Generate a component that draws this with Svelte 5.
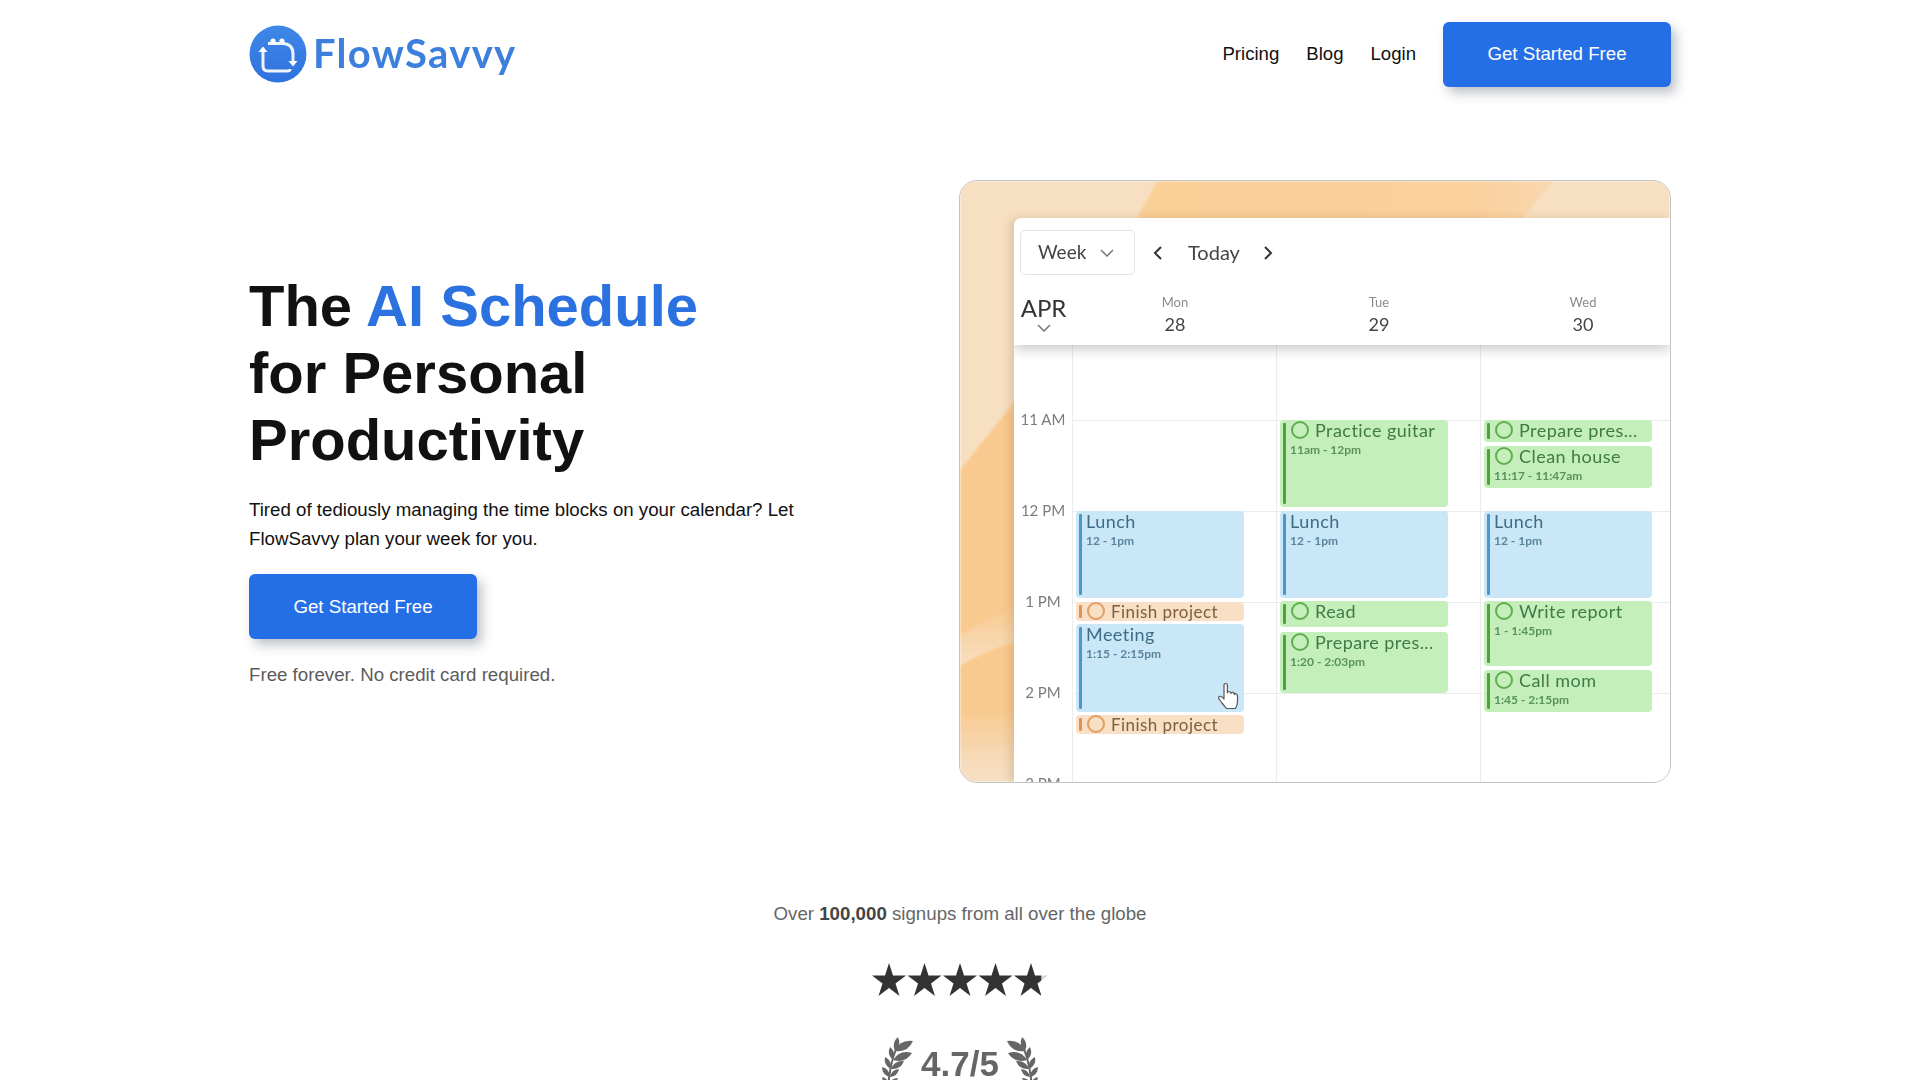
<script>
  const days = [
    {
      name: "Mon",
      date: 28,
      events: [
        { kind: "blue", title: "Lunch", time: "12 - 1pm", top: 166, height: 87 },
        { kind: "orange", title: "Finish project", task: true, top: 257, height: 19 },
        { kind: "blue", title: "Meeting", time: "1:15 - 2:15pm", top: 279, height: 88 },
        { kind: "orange", title: "Finish project", task: true, top: 370, height: 19 }
      ]
    },
    {
      name: "Tue",
      date: 29,
      events: [
        { kind: "green", title: "Practice guitar", time: "11am - 12pm", task: true, top: 75, height: 87 },
        { kind: "blue", title: "Lunch", time: "12 - 1pm", top: 166, height: 87 },
        { kind: "green", title: "Read", task: true, top: 256, height: 26 },
        { kind: "green", title: "Prepare pres...", time: "1:20 - 2:03pm", task: true, top: 287, height: 61 }
      ]
    },
    {
      name: "Wed",
      date: 30,
      events: [
        { kind: "green", title: "Prepare pres...", task: true, top: 75, height: 22 },
        { kind: "green", title: "Clean house", time: "11:17 - 11:47am", task: true, top: 101, height: 42 },
        { kind: "blue", title: "Lunch", time: "12 - 1pm", top: 166, height: 87 },
        { kind: "green", title: "Write report", time: "1 - 1:45pm", task: true, top: 256, height: 65 },
        { kind: "green", title: "Call mom", time: "1:45 - 2:15pm", task: true, top: 325, height: 42 }
      ]
    }
  ];

  const hours = ["11 AM", "12 PM", "1 PM", "2 PM", "3 PM"];
  const starPoints = "17,0 21,12.5 34,12.5 23.5,20.5 27.5,33 17,25 6.5,33 10.5,20.5 0,12.5 13,12.5";

  // base and tip of each laurel leaf, bottom row last
  const leaves = [
    [20, 20, 38, 10], [20, 20, 23, 6],
    [18, 29, 37, 22], [18, 29, 15, 16],
    [16, 38, 29, 30], [16, 38, 10, 26],
    [15, 46, 24, 38], [15, 46, 7, 36],
    [14, 54, 23, 47], [14, 54, 7, 46]
  ];

  function leafPath([x0, y0, x1, y1]) {
    const mx = (x0 + x1) / 2;
    const my = (y0 + y1) / 2;
    const nx = (y1 - y0) * 0.38;
    const ny = (x0 - x1) * 0.38;
    return `M${x0} ${y0} Q${mx + nx} ${my + ny} ${x1} ${y1} Q${mx - nx} ${my - ny} ${x0} ${y0} Z`;
  }
</script>

{#snippet laurel()}
  <svg class="laurel" width="38" height="60" viewBox="5 0 38 60" fill="#666">
    <path d="M13 60 Q14 36 21 18" fill="none" stroke="#666" stroke-width="2" />
    {#each leaves as leaf}
      <path d={leafPath(leaf)} />
    {/each}
  </svg>
{/snippet}

<div class="page">
  <header class="nav">
    <a class="logo" href="#top">
      <svg width="58" height="58" viewBox="0 0 58 58">
        <defs>
          <linearGradient id="logo-fill" x1="0" y1="0" x2="0" y2="1">
            <stop offset="0" stop-color="#3f87e8" />
            <stop offset="1" stop-color="#2f72de" />
          </linearGradient>
        </defs>
        <circle cx="29" cy="29" r="28.5" fill="url(#logo-fill)" />
        <path d="M14 26 V41 Q14 46 19 46 H38 Q41 46 41 44" fill="none" stroke="#fff" stroke-width="3" stroke-opacity=".92" />
        <path d="M9.5 27 L14 21.5 L18.5 27 Z" fill="#fff" />
        <path d="M19 18.5 H33 Q44 18.5 44 29 V37" fill="none" stroke="#fff" stroke-width="3" stroke-opacity=".92" />
        <path d="M39.5 36 L44 41.5 L48.5 36 Z" fill="#fff" />
        <circle cx="24" cy="16" r="2.6" fill="#fff" />
        <circle cx="33" cy="16" r="2.6" fill="#fff" />
      </svg>
      <span class="wordmark">FlowSavvy</span>
    </a>
    <nav class="links">
      <a href="#pricing">Pricing</a>
      <a href="#blog">Blog</a>
      <a href="#login">Login</a>
      <a class="cta" href="#start">Get Started Free</a>
    </nav>
  </header>

  <main class="hero">
    <section class="pitch">
      <h1>The <span class="accent">AI Schedule</span><br />for Personal<br />Productivity</h1>
      <p class="lead">Tired of tediously managing the time blocks on your calendar? Let FlowSavvy plan your week for you.</p>
      <a class="cta" href="#start">Get Started Free</a>
      <p class="note">Free forever. No credit card required.</p>
    </section>

    <figure class="shot">
      <svg class="backdrop" viewBox="0 0 712 603" preserveAspectRatio="none">
        <defs>
          <linearGradient id="band-fade" x1="0" y1="0" x2="0" y2="1">
            <stop offset="0" stop-color="#f9ca90" />
            <stop offset="1" stop-color="#f8dfc0" />
          </linearGradient>
          <linearGradient id="foot-fade" x1="0" y1="0" x2="0" y2="1">
            <stop offset="0" stop-color="#f9ca90" />
            <stop offset="0.75" stop-color="#f6dcbc" />
            <stop offset="1" stop-color="#f6dfc3" />
          </linearGradient>
          <linearGradient id="strip-fade" x1="0" y1="0" x2="1" y2="0">
            <stop offset="0" stop-color="#fbcf98" />
            <stop offset="0.8" stop-color="#fbd09c" />
            <stop offset="1" stop-color="#f9d7ae" />
          </linearGradient>
        </defs>
        <rect width="712" height="603" fill="#f7dfc1" />
        <path d="M198 0 H594 L562 40 H176 Z" fill="url(#strip-fade)" />
        <path d="M0 290 L56 220 V603 H0 Z" fill="#f9ca90" />
        <path d="M0 456 Q28 440 56 426 V462 Q28 470 0 486 Z" fill="url(#band-fade)" />
        <path d="M0 530 H56 V603 H0 Z" fill="url(#foot-fade)" />
      </svg>
      <div class="calendar">
        <div class="cal-head">
          <div class="toolbar">
            <div class="view-select">
              <span class="label">Week</span>
              <svg width="14" height="8" viewBox="0 0 14 8" fill="none" stroke="#777" stroke-width="1.5"><path d="M1 1 L7 7 L13 1" /></svg>
            </div>
            <svg class="arrow" width="9" height="14" viewBox="0 0 9 14" fill="none" stroke="#333" stroke-width="2"><path d="M8 1 L2 7 L8 13" /></svg>
            <span class="today label">Today</span>
            <svg class="arrow next" width="9" height="14" viewBox="0 0 9 14" fill="none" stroke="#333" stroke-width="2"><path d="M1 1 L7 7 L1 13" /></svg>
          </div>
          <div class="day-row">
            <div class="month">
              <span>APR</span>
              <svg width="14" height="8" viewBox="0 0 14 8" fill="none" stroke="#777" stroke-width="1.5"><path d="M1 1 L7 7 L13 1" /></svg>
            </div>
            {#each days as day}
              <div class="day-head">
                <span class="day-name">{day.name}</span>
                <span class="day-date">{day.date}</span>
              </div>
            {/each}
          </div>
        </div>

        <div class="cal-body">
          <div class="gutter">
            {#each hours as hour}
              <div class="hour">{hour}</div>
            {/each}
          </div>
          {#each days as day}
            <div class="day-col">
              {#each day.events as ev}
                <div class="event {ev.kind}" style="top: {ev.top}px; height: {ev.height}px">
                  <div class="event-title">
                    {#if ev.task}<span class="ring"></span>{/if}
                    <span>{ev.title}</span>
                  </div>
                  {#if ev.time}<div class="event-time">{ev.time}</div>{/if}
                </div>
              {/each}
            </div>
          {/each}
          <svg class="pointer" width="22" height="28" viewBox="0 0 22 28" fill="#fff" stroke="#555" stroke-width="1.2" stroke-linejoin="round">
            <path d="M7 15 V3.5 Q7 1.5 8.7 1.5 Q10.4 1.5 10.4 3.5 V11 Q10.6 9.4 12.3 9.5 Q14 9.6 14 11.5 Q14.2 10.2 15.8 10.4 Q17.4 10.6 17.4 12.5 Q17.7 11.5 19 11.8 Q20.5 12.1 20.5 14 V19 Q20.5 23 18.5 26.5 H9.5 Q7.5 24 5 21 L2 17 Q1 15 2.8 14.3 Q4.5 13.8 7 17 Z" />
          </svg>
        </div>
      </div>
    </figure>
  </main>

  <section class="proof">
    <p>Over <strong>100,000</strong> signups from all over the globe</p>
    <svg class="stars" width="178" height="34" viewBox="0 0 178 34">
      <defs>
        <linearGradient id="star-fade" x1="0" y1="0" x2="1" y2="0">
          <stop offset="0.78" stop-color="#333" />
          <stop offset="0.82" stop-color="#d8d8d8" />
        </linearGradient>
      </defs>
      {#each [0, 1, 2, 3, 4] as i}
        <polygon points={starPoints} transform="translate({i * 35.5} 0)" fill={i === 4 ? "url(#star-fade)" : "#333"} />
      {/each}
    </svg>
    <div class="rating">
      {@render laurel()}
      <span class="score">4.7/5</span>
      <span class="flip">{@render laurel()}</span>
    </div>
  </section>
</div>

<style>
  :global(html), :global(body) {
    margin: 0;
    overflow-x: hidden;
  }

  :global(body) {
    background: #fff;
    font-family: "Liberation Sans", Arial, sans-serif;
    color: #111;
  }

  a {
    color: inherit;
    text-decoration: none;
  }

  .page {
    width: 1422px;
    margin: 0 auto;
  }

  .nav {
    display: flex;
    align-items: center;
    justify-content: space-between;
    padding-top: 22px;
    height: 64px;
  }

  .logo {
    display: flex;
    align-items: center;
    gap: 6px;
    filter: blur(0.4px);
  }

  .wordmark {
    font-family: Lato, sans-serif;
    font-weight: 700;
    font-size: 40px;
    line-height: 54px;
    letter-spacing: 1.3px;
    color: #3d7fdd;
    margin-top: -2px;
  }

  .links {
    display: flex;
    align-items: center;
    gap: 27px;
    font-size: 18.6px;
  }

  .cta {
    display: inline-flex;
    align-items: center;
    justify-content: center;
    width: 228px;
    height: 65px;
    border-radius: 6px;
    background: #256fe6;
    color: #fff;
    font-size: 18.7px;
    box-shadow: 5px 6px 12px rgba(40, 50, 70, 0.3);
  }

  .hero {
    display: flex;
    justify-content: space-between;
    align-items: center;
    margin-top: 94px;
  }

  .pitch {
    width: 600px;
    padding-bottom: 5px;
  }

  h1 {
    margin: 0;
    font-size: 58px;
    line-height: 67px;
    font-weight: 700;
    color: #111;
  }

  .accent {
    color: #2b72e0;
  }

  .lead {
    margin: 22px 0 21px;
    font-size: 18.7px;
    line-height: 29px;
    width: 560px;
  }

  .note {
    margin: 25px 0 0;
    font-size: 18.7px;
    color: #5c5c5c;
  }

  .shot {
    position: relative;
    box-sizing: border-box;
    width: 712px;
    height: 603px;
    margin: 0;
    padding: 37px 0 0 54px;
    border: 1px solid #c4c4c4;
    border-radius: 18px;
    overflow: hidden;
  }

  .backdrop {
    position: absolute;
    inset: 0;
    width: 100%;
    height: 100%;
    filter: blur(1px);
  }

  .calendar {
    position: relative;
    height: 565px;
    background: #fff;
    border-top-left-radius: 8px;
    box-shadow: -4px 0 10px rgba(120, 80, 30, 0.18);
    overflow: hidden;
    font-family: Lato, sans-serif;
    filter: blur(0.5px);
  }

  .cal-head {
    position: relative;
    z-index: 2;
    height: 127px;
    background: #fff;
    box-shadow: 0 4px 12px rgba(0, 0, 0, 0.22);
  }

  .toolbar {
    display: flex;
    align-items: center;
    padding: 12px 0 0 6px;
    color: #444;
    font-size: 19px;
  }

  .label {
    padding-bottom: 2px;
  }

  .view-select {
    display: flex;
    align-items: center;
    gap: 14px;
    box-sizing: border-box;
    width: 115px;
    height: 45px;
    padding-left: 17px;
    border: 1px solid #e4e4e4;
    border-radius: 5px;
  }

  .arrow {
    margin-left: 18px;
  }

  .arrow.next {
    margin-left: 0;
  }

  .today {
    margin: 0 24px 0 26px;
    font-size: 20px;
  }

  .day-row {
    display: grid;
    grid-template-columns: 59px 204px 204px 204px;
    margin-top: 18px;
  }

  .month {
    display: flex;
    flex-direction: column;
    align-items: center;
    font-size: 24px;
    line-height: 25px;
    padding-top: 2px;
    color: #333;
  }

  .month svg {
    margin-top: 4px;
  }

  .day-head {
    display: flex;
    flex-direction: column;
    align-items: center;
  }

  .day-name {
    font-size: 13px;
    line-height: 18px;
    color: #8b8b8b;
  }

  .day-date {
    font-size: 18px;
    line-height: 27px;
    color: #444;
  }

  .cal-body {
    position: relative;
    display: grid;
    grid-template-columns: 58px 204px 204px 1fr;
    height: 438px;
    overflow: hidden;
  }

  .gutter {
    padding-top: 65px;
  }

  .hour {
    height: 91px;
    line-height: 18px;
    text-align: center;
    font-size: 15px;
    color: #7b7b7b;
  }

  .day-col {
    position: relative;
    border-left: 1px solid #ececec;
    background-image: linear-gradient(#ececec 1px, transparent 1px);
    background-size: 100% 91px;
    background-position: 0 75px;
  }

  .event {
    position: absolute;
    left: 3px;
    box-sizing: border-box;
    width: 168px;
    padding-left: 10px;
    border-radius: 4px;
    overflow: hidden;
  }

  .event::before {
    content: "";
    position: absolute;
    left: 3px;
    top: 3px;
    bottom: 3px;
    width: 3px;
    border-radius: 1px;
    background: var(--bar);
  }

  .blue {
    --bar: #4b97c9;
    background: #c9e7f6;
    color: #3f6c87;
  }

  .green {
    --bar: #4fa13d;
    background: #c4efbb;
    color: #3f7a47;
  }

  .orange {
    --bar: #df9350;
    background: #f8dfc6;
    color: #7d5f3b;
  }

  .event-title {
    display: flex;
    align-items: center;
    gap: 6px;
    height: 20px;
    font-size: 18px;
    letter-spacing: 0.45px;
    white-space: nowrap;
  }

  .orange .event-title {
    height: 18px;
    font-size: 17px;
  }

  .ring {
    flex: none;
    box-sizing: border-box;
    width: 18px;
    height: 18px;
    margin-left: 1px;
    border: 2px solid var(--bar);
    border-radius: 50%;
    opacity: 0.85;
  }

  .event-time {
    margin-top: 3px;
    font-size: 12px;
    line-height: 14px;
    font-weight: 700;
    opacity: 0.8;
  }

  .pointer {
    position: absolute;
    left: 203px;
    top: 337px;
    z-index: 1;
  }

  .proof {
    display: flex;
    flex-direction: column;
    align-items: center;
    margin-top: 120px;
  }

  .proof p {
    margin: 0;
    font-size: 18.7px;
    color: #666;
  }

  .proof strong {
    color: #444;
  }

  .stars {
    margin: 38px 0 0 2px;
  }

  .rating {
    display: flex;
    align-items: flex-start;
    margin-top: 34px;
    font-size: 35px;
    line-height: 40px;
    font-weight: 700;
    color: #666;
    filter: blur(0.3px);
  }

  .score {
    padding-top: 13px;
    margin: 0 3px;
  }

  .flip {
    display: block;
    transform: scaleX(-1);
  }
</style>
